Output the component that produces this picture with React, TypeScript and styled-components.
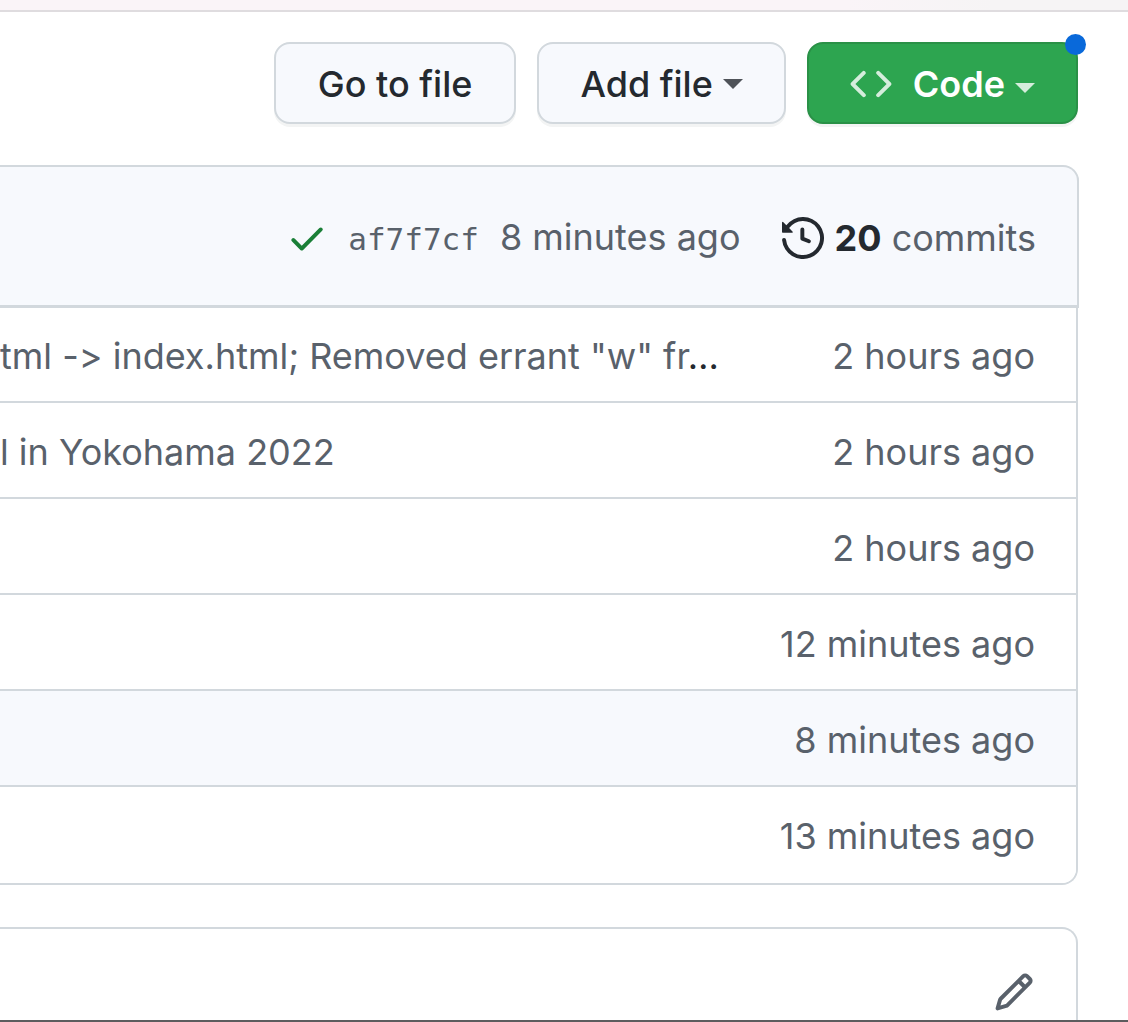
import React from "react";
import styled, { createGlobalStyle } from "styled-components";

const color = {
  text: "#24292f",
  muted: "#59616b",
  border: "#d2d8dd",
  subtle: "#f7f9fd",
  green: "#2da550",
  blue: "#0969da",
};

const GlobalStyle = createGlobalStyle`
  *, *::before, *::after { box-sizing: border-box; }
  body {
    margin: 0;
    background: #fff;
    color: ${color.text};
    font-family: Inter, "Liberation Sans", sans-serif;
    font-size: 36px;
    font-variant-ligatures: no-contextual;
    line-height: 48px;
  }
`;

const Page = styled.div`
  display: flex;
  flex-direction: column;
  min-height: 100vh;
  border-bottom: 2px solid #5c5c5e;
`;

const TopStrip = styled.div`
  height: 12px;
  background: linear-gradient(90deg, #faf4f8 75%, #f6f4f5 88%);
  border-bottom: 2px solid #dfdcdf;
`;

const Main = styled.main`
  display: flex;
  flex: 1;
  flex-direction: column;
  padding: 30px 50px 0 0;
`;

const Toolbar = styled.div`
  display: flex;
  justify-content: flex-end;
  gap: 21px;
  margin-bottom: 41px;
`;

const Button = styled.button<{ $primary?: boolean; $menu?: boolean }>`
  position: relative;
  display: flex;
  align-items: center;
  height: 82px;
  padding: 2px ${(p) => (p.$menu ? 41 : 42)}px 0;
  border: 2px solid ${(p) => (p.$primary ? "#2a9147" : color.border)};
  border-radius: 16px;
  background: ${(p) => (p.$primary ? color.green : color.subtle)};
  box-shadow: 0 3px 0 rgba(27, 31, 36, 0.05);
  color: ${(p) => (p.$primary ? "#fff" : color.text)};
  font: inherit;
  font-weight: ${(p) => (p.$primary ? 600 : 500)};
  white-space: nowrap;
  cursor: pointer;
`;

const Caret = styled.span<{ $low?: boolean }>`
  margin-left: 10px;
  margin-top: ${(p) => (p.$low ? 8 : 0)}px;
  border: 10px solid transparent;
  border-top-color: currentColor;
  border-bottom: 0;
  opacity: 0.8;
`;

const Dot = styled.span`
  position: absolute;
  top: -10px;
  right: -10px;
  width: 21px;
  height: 21px;
  border-radius: 50%;
  background: ${color.blue};
`;

const Svg = styled.svg<{ $tone?: string }>`
  display: block;
  flex: none;
  width: 42px;
  height: 42px;
  fill: ${(p) => p.$tone ?? "currentColor"};
`;

const CodeIcon = styled(Svg)`
  margin-right: 21px;
  opacity: 0.8;
`;

const CommitBar = styled.header`
  position: relative;
  display: flex;
  align-items: center;
  justify-content: flex-end;
  height: 142px;
  margin-right: -1px;
  padding: 3px 41px 0 0;
  border: solid ${color.border};
  border-width: 2px 2px 2px 0;
  border-top-right-radius: 16px;
  background: ${color.subtle};
  box-shadow: 0 1px 0 ${color.border};
  color: ${color.muted};
  white-space: nowrap;
`;

const CommitInfo = styled.div`
  display: flex;
  align-items: baseline;
  gap: 21px;
  margin: 0 41px 0 20px;
  padding-top: 1px;
`;

const MutedLink = styled.a`
  color: inherit;
  text-decoration: none;
`;

const Hash = styled(MutedLink)`
  font-family: "DejaVu Sans Mono", monospace;
  font-size: 31px;
`;

const Commits = styled(MutedLink)`
  display: flex;
  align-items: center;
  gap: 11px;

  strong {
    color: ${color.text};
    font-weight: 700;
  }
`;

const FilePanel = styled.section`
  overflow: hidden;
  border: solid ${color.border};
  border-width: 0 2px 2px 0;
  border-bottom-right-radius: 16px;
`;

const FileTable = styled.table`
  width: 100%;
  border-collapse: separate;
  border-spacing: 0;
`;

const Cell = styled.td<{ $end?: boolean }>`
  height: 96px;
  padding: 4px ${(p) => (p.$end ? 41 : 0)}px 0 0;
  border-bottom: 2px solid ${color.border};
  color: ${color.muted};
  text-align: ${(p) => (p.$end ? "right" : "left")};
  white-space: nowrap;
`;

const FileRow = styled.tr<{ $active?: boolean }>`
  background: ${(p) => (p.$active ? color.subtle : "#fff")};

  &:last-child ${Cell} {
    border-bottom-color: transparent;
  }
`;

const Ellipsis = styled.span`
  color: ${color.text};
`;

const Readme = styled.section`
  display: flex;
  flex: 1;
  align-items: flex-start;
  justify-content: flex-end;
  margin-top: 42px;
  padding: 42px 41px 0 0;
  border: solid ${color.border};
  border-width: 2px 2px 0 0;
  border-top-right-radius: 16px;
`;

const IconButton = styled.button`
  padding: 0;
  border: 0;
  background: none;
  color: ${color.muted};
  cursor: pointer;
`;

const paths = {
  code: "M4.72 3.22a.75.75 0 011.06 1.06L2.06 8l3.72 3.72a.75.75 0 11-1.06 1.06L.47 8.53a.75.75 0 010-1.06l4.25-4.25zm6.56 0a.75.75 0 10-1.06 1.06L13.94 8l-3.72 3.72a.75.75 0 101.06 1.06l4.25-4.25a.75.75 0 000-1.06l-4.25-4.25z",
  check: "M13.78 4.22a.75.75 0 010 1.06l-7.25 7.25a.75.75 0 01-1.06 0L2.22 9.28a.75.75 0 011.06-1.06L6 10.94l6.72-6.72a.75.75 0 011.06 0z",
  history:
    "M1.643 3.143L.427 1.927A.25.25 0 000 2.104V5.75c0 .138.112.25.25.25h3.646a.25.25 0 00.177-.427L2.715 4.215a6.5 6.5 0 11-1.18 4.458.75.75 0 10-1.493.154 8.001 8.001 0 101.6-5.684zM7.75 4a.75.75 0 01.75.75v2.992l2.028.812a.75.75 0 01-.557 1.392l-2.5-1A.75.75 0 017 8.25v-3.5A.75.75 0 017.75 4z",
  pencil:
    "M11.013 1.427a1.75 1.75 0 012.474 0l1.086 1.086a1.75 1.75 0 010 2.474l-8.61 8.61c-.21.21-.47.364-.756.445l-3.251.93a.75.75 0 01-.927-.928l.929-3.25a1.75 1.75 0 01.445-.758l8.61-8.61zm1.414 1.06a.25.25 0 00-.354 0L10.811 3.75l1.439 1.44 1.263-1.263a.25.25 0 000-.354l-1.086-1.086zM11.189 6.25L9.75 4.81l-6.286 6.287a.25.25 0 00-.064.108l-.558 1.953 1.953-.558a.249.249 0 00.108-.064l6.286-6.286z",
};

const files: { message?: string; truncated?: boolean; age: string; active?: boolean }[] = [
  { message: 'tml -> index.html; Removed errant "w" fr', truncated: true, age: "2 hours ago" },
  { message: "l in Yokohama 2022", age: "2 hours ago" },
  { age: "2 hours ago" },
  { age: "12 minutes ago" },
  { age: "8 minutes ago", active: true },
  { age: "13 minutes ago" },
];

export default function App() {
  return (
    <Page>
      <GlobalStyle />
      <TopStrip />
      <Main>
        <Toolbar>
          <Button type="button">Go to file</Button>
          <Button type="button" $menu>
            Add file
            <Caret />
          </Button>
          <Button type="button" $primary $menu>
            <CodeIcon viewBox="0 0 16 16" aria-hidden="true">
              <path d={paths.code} />
            </CodeIcon>
            Code
            <Caret $low />
            <Dot />
          </Button>
        </Toolbar>
        <CommitBar>
          <Svg viewBox="0 0 16 16" $tone="#1a7f37" aria-hidden="true">
            <path d={paths.check} />
          </Svg>
          <CommitInfo>
            <Hash href="#commit">af7f7cf</Hash>
            <MutedLink href="#commit">8 minutes ago</MutedLink>
          </CommitInfo>
          <Commits href="#commits">
            <Svg viewBox="0 0 16 16" $tone={color.text} aria-hidden="true">
              <path d={paths.history} />
            </Svg>
            <span>
              <strong>20</strong> commits
            </span>
          </Commits>
        </CommitBar>
        <FilePanel>
          <FileTable>
            <tbody>
              {files.map((file, i) => (
                <FileRow key={i} $active={file.active}>
                  <Cell>
                    {file.message}
                    {file.truncated && <Ellipsis>…</Ellipsis>}
                  </Cell>
                  <Cell $end>{file.age}</Cell>
                </FileRow>
              ))}
            </tbody>
          </FileTable>
        </FilePanel>
        <Readme>
          <IconButton type="button" aria-label="Edit">
            <Svg viewBox="0 0 16 16" aria-hidden="true">
              <path d={paths.pencil} />
            </Svg>
          </IconButton>
        </Readme>
      </Main>
    </Page>
  );
}
